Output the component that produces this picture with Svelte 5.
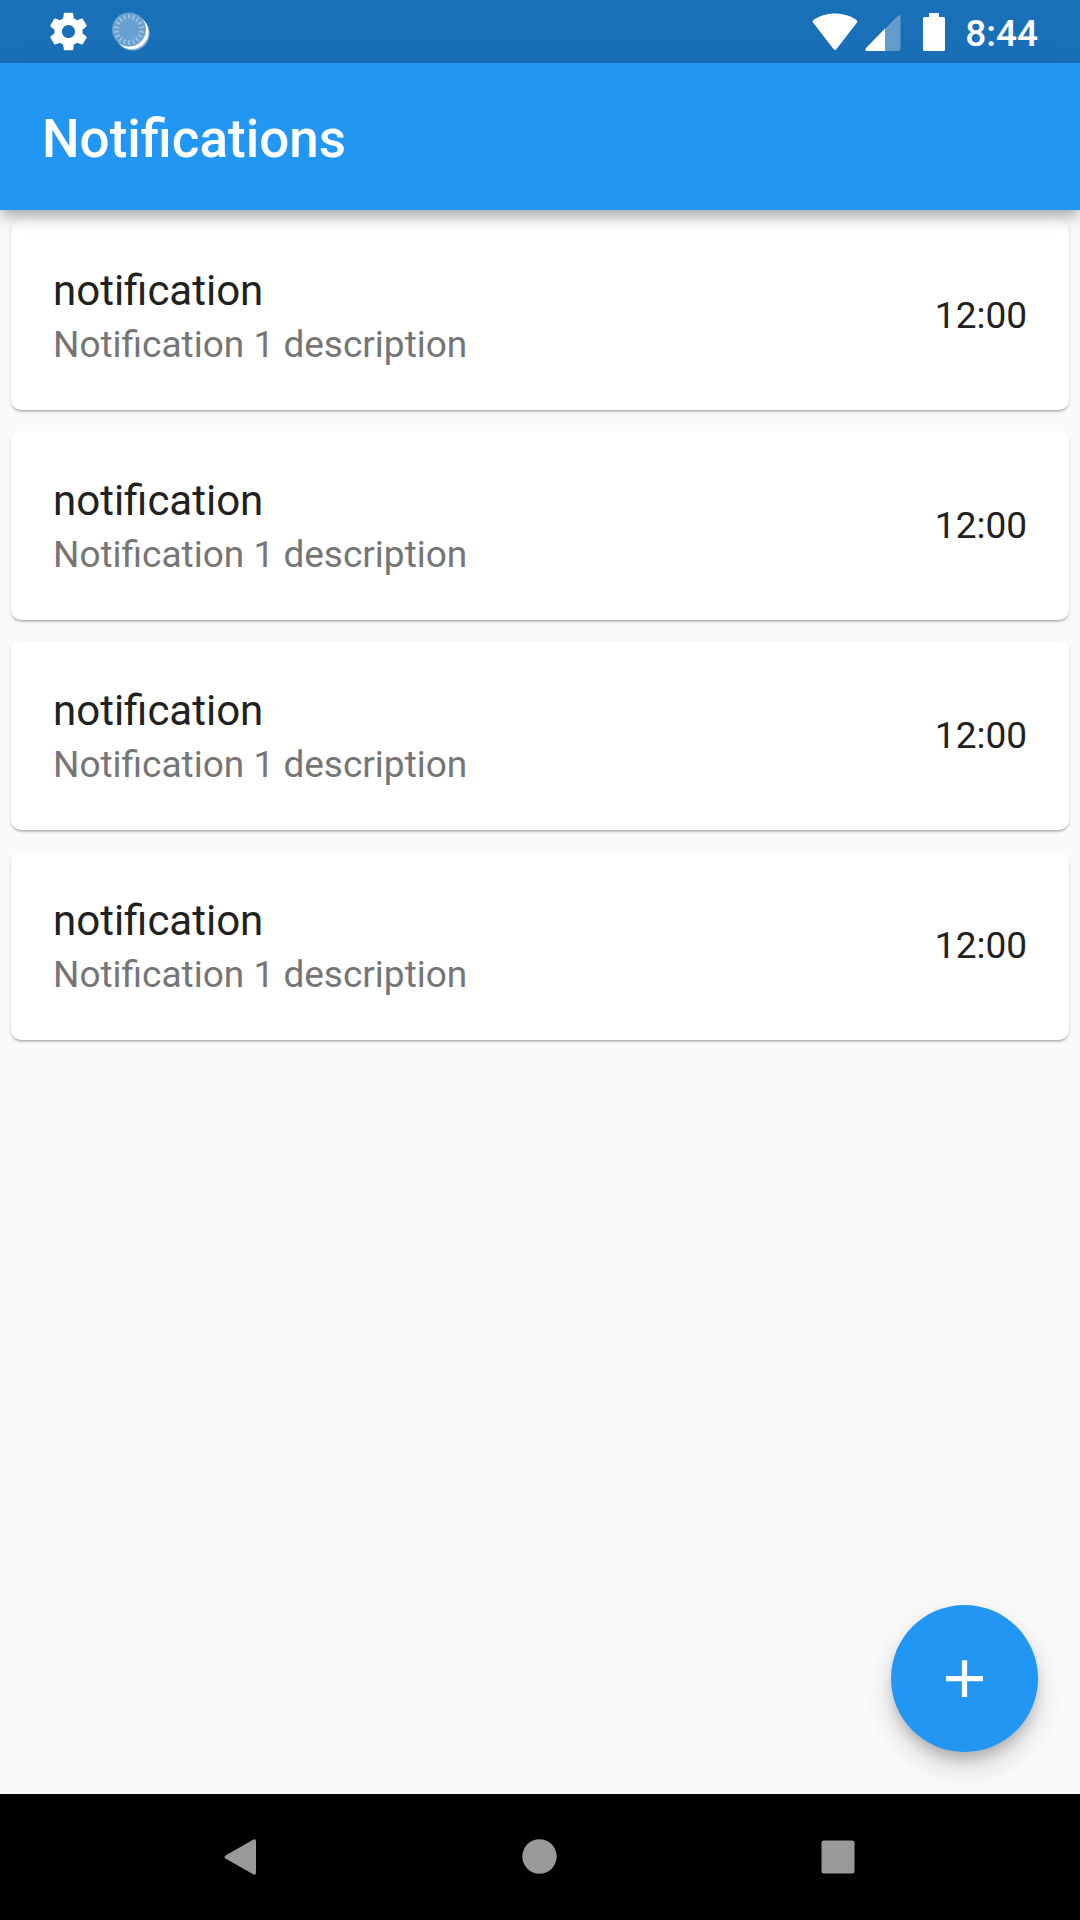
<script>
  const notifications = [
    { id: 1, title: 'notification', description: 'Notification 1 description', time: '12:00' },
    { id: 2, title: 'notification', description: 'Notification 1 description', time: '12:00' },
    { id: 3, title: 'notification', description: 'Notification 1 description', time: '12:00' },
    { id: 4, title: 'notification', description: 'Notification 1 description', time: '12:00' }
  ];
  const ticks = Array.from({ length: 18 }, (_, i) => i * 20);
</script>

<div class="screen">
  <div class="status">
    <div class="status-left">
      <svg width="45" height="45" viewBox="0 0 24 24" aria-hidden="true">
        <path fill="#fff" d="M19.43 12.98c.04-.32.07-.64.07-.98s-.03-.66-.07-.98l2.11-1.65c.19-.15.24-.42.12-.64l-2-3.46c-.12-.22-.39-.3-.61-.22l-2.49 1c-.52-.4-1.08-.73-1.69-.98l-.38-2.65C14.46 2.18 14.25 2 14 2h-4c-.25 0-.46.18-.49.42l-.38 2.65c-.61.25-1.17.59-1.69.98l-2.49-1c-.23-.09-.49 0-.61.22l-2 3.46c-.13.22-.07.49.12.64l2.11 1.65c-.04.32-.07.65-.07.98s.03.66.07.98l-2.11 1.65c-.19.15-.24.42-.12.64l2 3.46c.12.22.39.3.61.22l2.49-1c.52.4 1.08.73 1.69.98l.38 2.65c.03.24.24.42.49.42h4c.25 0 .46-.18.49-.42l.38-2.65c.61-.25 1.17-.59 1.69-.98l2.49 1c.23.09.49 0 .61-.22l2-3.46c.12-.22.07-.49-.12-.64l-2.11-1.65zM12 15.5c-1.93 0-3.5-1.57-3.5-3.5s1.57-3.5 3.5-3.5 3.5 1.57 3.5 3.5-1.57 3.5-3.5 3.5z" />
      </svg>
      <svg width="40" height="40" viewBox="0 0 40 40" aria-hidden="true">
        <circle cx="21.500" cy="21.500" r="17" fill="#8db6da" />
        <circle cx="20.500" cy="20" r="17" fill="#fff" />
        <circle cx="18" cy="17.500" r="17" fill="#69a0cf" />
        {#each ticks as angle (angle)}
          <path d="M18 2v5" stroke="#a3c5e2" stroke-width="1.5" transform="rotate({angle} 18 17.500)" />
        {/each}
      </svg>
    </div>
    <div class="status-right">
      <svg width="46" height="38" viewBox="0 0 46 38" aria-hidden="true">
        <path fill="#fff" d="M1 9.5Q0 8 1.500 7C13-1.700 33-1.700 44.500 7Q46 8 45 9.500L24.500 36Q23 38 21.500 36Z" />
      </svg>
      <svg class="signal" width="36" height="38" viewBox="0 0 36 38" aria-hidden="true">
        <path fill="#639ccc" d="M20 16L33 2.700Q35.500 1 35.500 4V36q0 2-2 2H20Z" />
        <path fill="#fff" d="M20 15.500V38H2Q-.5 38 1 35Z" />
      </svg>
      <svg class="battery" width="22" height="38" viewBox="0 0 22 38" aria-hidden="true">
        <path fill="#fff" d="M6 0H16V4H20.500Q22 4 22 5.500V36.500Q22 38 20.500 38H1.500Q0 38 0 36.500V5.500Q0 4 1.500 4H6Z" />
      </svg>
      <time class="clock">8:44</time>
    </div>
  </div>

  <header class="app-bar">
    <h1>Notifications</h1>
  </header>

  <main>
    <ul class="list">
      {#each notifications as item (item.id)}
        <li class="card">
          <div class="text">
            <h2>{item.title}</h2>
            <p>{item.description}</p>
          </div>
          <time>{item.time}</time>
        </li>
      {/each}
    </ul>
    <button class="fab" type="button" aria-label="Add notification">
      <svg width="63" height="63" viewBox="0 0 24 24" aria-hidden="true">
        <path fill="#fff" d="M19 13h-6v6h-2v-6H5v-2h6V5h2v6h6v2z" />
      </svg>
    </button>
  </main>

  <nav class="system-nav" aria-label="System navigation">
    <button type="button" aria-label="Back">
      <svg width="36" height="36" viewBox="0 0 36 36" aria-hidden="true">
        <path fill="#999" d="M1.500 16.500L29.500 .5Q32 -.5 32 2.500V33.500Q32 36.500 29.500 35.500L1.500 19.500Q-.5 18 1.500 16.500Z" />
      </svg>
    </button>
    <button type="button" aria-label="Home">
      <svg width="36" height="36" viewBox="0 0 36 36" aria-hidden="true">
        <circle cx="17.500" cy="17.500" r="17.200" fill="#999" />
      </svg>
    </button>
    <button type="button" aria-label="Recent apps">
      <svg width="36" height="36" viewBox="0 0 36 36" aria-hidden="true">
        <rect x="1.500" y="1.500" width="33" height="33" rx="2.500" fill="#999" />
      </svg>
    </button>
  </nav>
</div>

<style>
  .screen {
    display: flex;
    flex-direction: column;
    min-height: 100vh;
    background: #fafafa;
    color: #212121;
    font-family: Roboto, sans-serif;
  }
  svg {
    display: block;
    flex: none;
  }
  button {
    display: flex;
    align-items: center;
    justify-content: center;
    padding: 0;
    border: 0;
    background: none;
    cursor: pointer;
  }
  .status {
    display: flex;
    align-items: center;
    justify-content: space-between;
    height: 63px;
    padding: 0 42px 0 46px;
    background: #1a70b8;
    color: #fff;
  }
  .status-left,
  .status-right {
    display: flex;
    align-items: center;
  }
  .status-left {
    gap: 20px;
  }
  .signal {
    margin-left: 7px;
  }
  .battery {
    margin-left: 22px;
  }
  .clock {
    margin-left: 20px;
    padding-top: 4px;
    font-size: 37px;
    line-height: 44px;
    font-weight: 500;
  }
  .app-bar {
    position: relative;
    z-index: 1;
    display: flex;
    align-items: center;
    height: 147px;
    padding: 0 42px;
    background: #2196f3;
    box-shadow:
      0 5px 10px -3px rgba(0, 0, 0, 0.2),
      0 10px 13px 0 rgba(0, 0, 0, 0.14),
      0 3px 26px 0 rgba(0, 0, 0, 0.06);
    color: #fff;
  }
  h1 {
    margin: 0;
    padding-top: 4px;
    font-size: 53px;
    line-height: 60px;
    font-weight: 500;
  }
  main {
    position: relative;
    flex: 1;
  }
  .list {
    display: flex;
    flex-direction: column;
    gap: 21px;
    margin: 0;
    padding: 11px;
    list-style: none;
  }
  .card {
    display: flex;
    align-items: center;
    justify-content: space-between;
    gap: 42px;
    padding: 41px 42px;
    border-radius: 10px;
    background: #fff;
    box-shadow:
      0 2px 2px -1px rgba(0, 0, 0, 0.2),
      0 2px 3px 0 rgba(0, 0, 0, 0.14),
      0 1px 5px 0 rgba(0, 0, 0, 0.04);
    font-size: 37px;
    line-height: 49px;
  }
  h2 {
    margin: 0;
    font-size: 42px;
    line-height: 58px;
    font-weight: 400;
  }
  p {
    margin: 0;
    color: #757575;
  }
  .fab {
    position: absolute;
    right: 42px;
    bottom: 42px;
    width: 147px;
    height: 147px;
    border-radius: 50%;
    background: #2196f3;
    box-shadow:
      0 8px 13px -3px rgba(0, 0, 0, 0.2),
      0 16px 26px 0 rgba(0, 0, 0, 0.14),
      0 3px 47px 0 rgba(0, 0, 0, 0.04);
  }
  .system-nav {
    display: grid;
    grid-template-columns: repeat(3, 1fr);
    height: 126px;
    padding: 0 93px;
    background: #000;
  }
</style>
